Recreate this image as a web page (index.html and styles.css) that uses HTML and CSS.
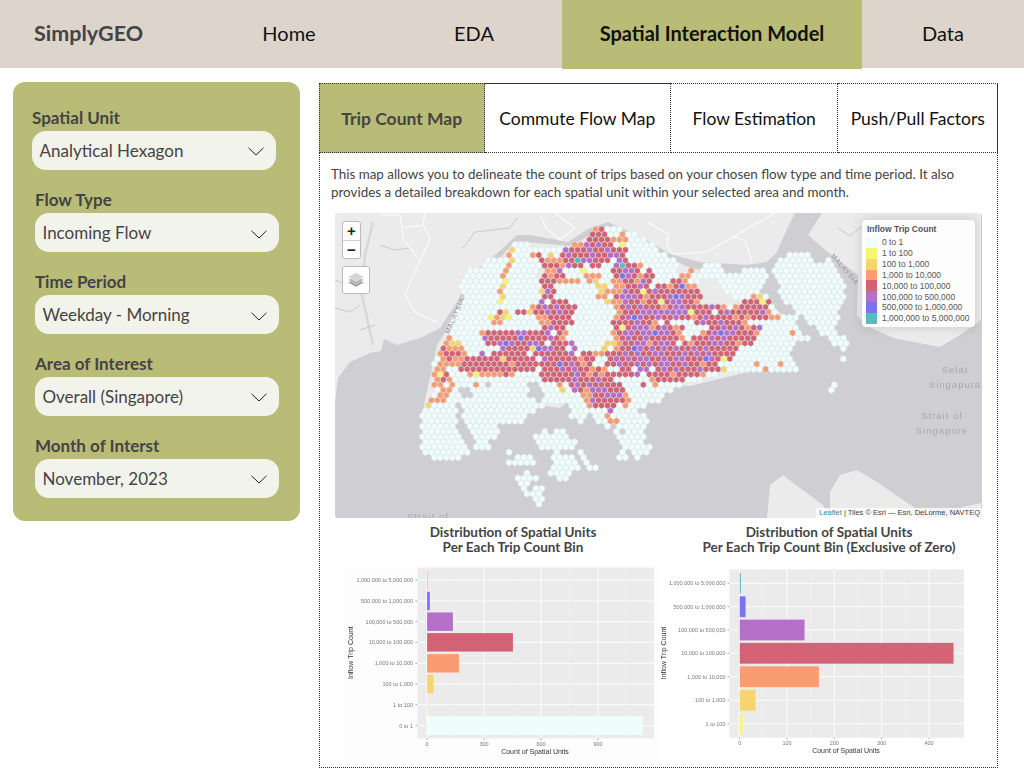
FILE: index.html
```html
<!DOCTYPE html>
<html lang="en">
<head>
  <meta charset="UTF-8">
  <meta name="viewport" content="width=device-width, initial-scale=1">
  <title>SimplyGEO</title>
  <link rel="stylesheet" href="styles.css">
</head>
<body>
  <header class="topbar">
    <div class="brand">SimplyGEO</div>
    <a class="nav-item nav-home">Home</a>
    <a class="nav-item nav-eda">EDA</a>
    <a class="nav-item nav-active">Spatial Interaction Model</a>
    <a class="nav-item nav-data">Data</a>
  </header>

  <div class="layout">
    <aside class="sidebar">
      <div class="field field-first">
        <div class="field-label">Spatial Unit</div>
        <div class="select"><span>Analytical Hexagon</span><svg class="chevron" viewBox="0 0 16 9"><path d="M.5.8 8 8l7.5-7.2"/></svg></div>
      </div>
      <div class="field">
        <div class="field-label">Flow Type</div>
        <div class="select"><span>Incoming Flow</span><svg class="chevron" viewBox="0 0 16 9"><path d="M.5.8 8 8l7.5-7.2"/></svg></div>
      </div>
      <div class="field">
        <div class="field-label">Time Period</div>
        <div class="select"><span>Weekday - Morning</span><svg class="chevron" viewBox="0 0 16 9"><path d="M.5.8 8 8l7.5-7.2"/></svg></div>
      </div>
      <div class="field">
        <div class="field-label">Area of Interest</div>
        <div class="select"><span>Overall (Singapore)</span><svg class="chevron" viewBox="0 0 16 9"><path d="M.5.8 8 8l7.5-7.2"/></svg></div>
      </div>
      <div class="field">
        <div class="field-label">Month of Interst</div>
        <div class="select"><span>November, 2023</span><svg class="chevron" viewBox="0 0 16 9"><path d="M.5.8 8 8l7.5-7.2"/></svg></div>
      </div>
    </aside>

    <main class="panel">
      <div class="tabs">
        <div class="tab tab-active">Trip Count Map</div>
        <div class="tab tab-commute">Commute Flow Map</div>
        <div class="tab tab-flow">Flow Estimation</div>
        <div class="tab tab-push">Push/Pull Factors</div>
      </div>

      <p class="intro">This map allows you to delineate the count of trips based on your chosen flow type and time period. It also provides a detailed breakdown for each spatial unit within your selected area and month.</p>

      <div class="map">
        <svg class="map-canvas" id="map-canvas" viewBox="335 213 647 305">
          <g class="land">
            <path d="M335 213V402L338 378 350 362 370 353 381 351 384 339 397 345 420 338 440 328 457 302 470 275 487 262 503 248 517 235 530 235 568 242 588 229 608 222 630 232 650 242 670 254 700 262 747 265 767 262 777 252 787 229 795 213Z"/>
            <path d="M808 235 830 254 858 275 857 315 865 325 893 338 940 347 960 335 981 320V213H822Z"/>
            <path d="M424 442V405L437 345 460 310 490 270 515 241 570 246 600 230 640 243 690 268 745 277 785 318 800 335 770 352 748 372 690 386 660 386 620 402 600 376 560 408 500 400 440 405Z"/>
            <path d="M830 518V492L840 475 857 470 877 482 900 498 915 508 917 518Z"/>
            <path d="M767 518 770 485 783 475 800 488 823 505 830 518Z"/>
            <path d="M950 518 962 507 981 503V518Z"/>
          </g>
          <path class="river" d="M373 222 365 255 362 295 373 345"/>
          <path class="creek" d="M335 308 350 312 360 305M335 280 345 284 361 270M380 245 395 250 410 248M463 248 475 232 510 228 517 218M360 330 375 325M838 228 850 236 860 228 875 222"/>
          <path class="road" d="M380 215H400L402 228 423 225 430 238 420 262 410 282 405 295 415 312 437 322M423 225 425 213M402 228 403 238 420 262M540 215 546 228 560 240 575 228 555 213M647 222 668 234 667 245 673 254 707 252 733 237 775 213M733 237 745 240 752 262"/>
          <g id="hexes"></g>
          <text class="place" x="955" y="373">Selat</text>
          <text class="place" x="955" y="388">Singapura</text>
          <text class="place" x="942" y="419">Strait of</text>
          <text class="place" x="942" y="434">Singapore</text>
          <text class="place" x="428" y="520">Strait of</text>
          <text class="border-label" transform="translate(449 334) rotate(-66)">MALAYSIA</text>
          <text class="border-label" transform="translate(831 256) rotate(50)">MALAYSIA</text>
        </svg>

        <div class="zoom-control">
          <div class="zoom-btn">+</div>
          <div class="zoom-btn">−</div>
        </div>
        <div class="layers-control">
          <svg viewBox="0 0 18 18" width="18" height="18">
            <path class="layer-low" d="M9 7 17 11.5 9 16 1 11.5Z"/>
            <path class="layer-mid" d="M9 4.5 17 9 9 13.5 1 9Z"/>
            <path class="layer-top" d="M9 1.5 17 6 9 10.5 1 6Z"/>
          </svg>
        </div>

        <div class="legend">
          <div class="legend-title">Inflow Trip Count</div>
          <div class="legend-row"><i class="swatch c0"></i>0 to 1</div>
          <div class="legend-row"><i class="swatch c1"></i>1 to 100</div>
          <div class="legend-row"><i class="swatch c2"></i>100 to 1,000</div>
          <div class="legend-row"><i class="swatch c3"></i>1,000 to 10,000</div>
          <div class="legend-row"><i class="swatch c4"></i>10,000 to 100,000</div>
          <div class="legend-row"><i class="swatch c5"></i>100,000 to 500,000</div>
          <div class="legend-row"><i class="swatch c6"></i>500,000 to 1,000,000</div>
          <div class="legend-row"><i class="swatch c7"></i>1,000,000 to 5,000,000</div>
        </div>
        <div class="attribution"><a>Leaflet</a> | Tiles © Esri — Esri, DeLorme, NAVTEQ</div>
      </div>

      <div class="charts">
        <section class="chart chart-left">
          <h3>Distribution of Spatial Units<br>Per Each Trip Count Bin</h3>
          <svg viewBox="343 565 317 195" width="317" height="195">
            <rect class="plot-bg" x="343" y="565" width="317" height="195"/>
            <rect class="plot" x="417.3" y="567.7" width="236.7" height="170.6"/>
            <path class="grid-minor" d="M455.7 567.7V738.3M512.7 567.7V738.3M569.3 567.7V738.3M626.3 567.7V738.3"/>
            <path class="grid-major" d="M427 567.7V738.3M484 567.7V738.3M541 567.7V738.3M598 567.7V738.3M417.3 580H654M417.3 601H654M417.3 621.7H654M417.3 642.3H654M417.3 663.3H654M417.3 684H654M417.3 704.7H654M417.3 725.7H654"/>
            <rect class="bar c7 faint" x="427" y="570.7" width="1" height="18.7"/>
            <rect class="bar c6" x="427" y="591.7" width="2.9" height="18.7"/>
            <rect class="bar c5" x="427" y="612.3" width="26" height="18.7"/>
            <rect class="bar c4" x="427" y="633" width="86" height="18.7"/>
            <rect class="bar c3" x="427" y="654" width="32" height="18.7"/>
            <rect class="bar c2" x="427" y="674.7" width="6.7" height="18.7"/>
            <rect class="bar c1 faint" x="427" y="695.3" width="1.5" height="18.7"/>
            <rect class="bar c0" x="427" y="716.3" width="216" height="18.7"/>
            <path class="tick" d="M415.5 580H417.3M415.5 601H417.3M415.5 621.7H417.3M415.5 642.3H417.3M415.5 663.3H417.3M415.5 684H417.3M415.5 704.7H417.3M415.5 725.7H417.3M427 738.3V740M484 738.3V740M541 738.3V740M598 738.3V740"/>
            <g class="tick-y">
              <text x="413" y="582">1,000,000 to 5,000,000</text>
              <text x="413" y="603">500,000 to 1,000,000</text>
              <text x="413" y="623.7">100,000 to 500,000</text>
              <text x="413" y="644.3">10,000 to 100,000</text>
              <text x="413" y="665.3">1,000 to 10,000</text>
              <text x="413" y="686">100 to 1,000</text>
              <text x="413" y="706.7">1 to 100</text>
              <text x="413" y="727.7">0 to 1</text>
            </g>
            <g class="tick-x">
              <text x="427" y="745.5">0</text>
              <text x="484" y="745.5">300</text>
              <text x="541" y="745.5">600</text>
              <text x="598" y="745.5">900</text>
            </g>
            <text class="axis-title" x="535" y="753.5">Count of Spatial Units</text>
            <text class="axis-title" transform="translate(352.5 652.7) rotate(-90)">Inflow Trip Count</text>
          </svg>
        </section>

        <section class="chart chart-right">
          <h3>Distribution of Spatial Units<br>Per Each Trip Count Bin (Exclusive of Zero)</h3>
          <svg viewBox="660 565 308 195" width="308" height="195">
            <rect class="plot" x="729.3" y="569.3" width="234.7" height="168.4"/>
            <path class="grid-minor" d="M763.3 569.3V737.7M810.7 569.3V737.7M858 569.3V737.7M905.3 569.3V737.7M952.7 569.3V737.7"/>
            <path class="grid-major" d="M739.7 569.3V737.7M787 569.3V737.7M834.3 569.3V737.7M881.7 569.3V737.7M929 569.3V737.7M729.3 583.3H964M729.3 606.7H964M729.3 630H964M729.3 653.3H964M729.3 676.7H964M729.3 700.3H964M729.3 723.7H964"/>
            <rect class="bar c7" x="739.7" y="572.8" width="1.3" height="21"/>
            <rect class="bar c6" x="739.7" y="596.2" width="6" height="21"/>
            <rect class="bar c5" x="739.7" y="619.5" width="65" height="21"/>
            <rect class="bar c4" x="739.7" y="642.8" width="214" height="21"/>
            <rect class="bar c3" x="739.7" y="666.2" width="79.3" height="21"/>
            <rect class="bar c2" x="739.7" y="689.8" width="16" height="21"/>
            <rect class="bar c1" x="739.7" y="713.2" width="3" height="21"/>
            <path class="tick" d="M727.5 583.3H729.3M727.5 606.7H729.3M727.5 630H729.3M727.5 653.3H729.3M727.5 676.7H729.3M727.5 700.3H729.3M727.5 723.7H729.3M739.7 737.7V739.4M787 737.7V739.4M834.3 737.7V739.4M881.7 737.7V739.4M929 737.7V739.4"/>
            <g class="tick-y">
              <text x="725.5" y="585.3">1,000,000 to 5,000,000</text>
              <text x="725.5" y="608.7">500,000 to 1,000,000</text>
              <text x="725.5" y="632">100,000 to 500,000</text>
              <text x="725.5" y="655.3">10,000 to 100,000</text>
              <text x="725.5" y="678.7">1,000 to 10,000</text>
              <text x="725.5" y="702.3">100 to 1,000</text>
              <text x="725.5" y="725.7">1 to 100</text>
            </g>
            <g class="tick-x">
              <text x="739.7" y="745">0</text>
              <text x="787" y="745">100</text>
              <text x="834.3" y="745">200</text>
              <text x="881.7" y="745">300</text>
              <text x="929" y="745">400</text>
            </g>
            <text class="axis-title" x="846" y="753.2">Count of Spatial Units</text>
            <text class="axis-title" transform="translate(665.5 653) rotate(-90)">Inflow Trip Count</text>
          </svg>
        </section>
      </div>
    </main>
  </div>

  <script src="script.js"></script>
</body>
</html>
```

FILE: styles.css
```css
* {
  box-sizing: border-box;
}

body {
  margin: 0;
  background: white;
  color: #444;
  font-family: Lato, "Open Sans", sans-serif;
}

.topbar {
  display: flex;
  height: 68px;
  background: #ddd5cc;
}

.brand {
  width: 196px;
  padding-left: 34px;
  font-size: 21.5px;
  font-weight: 700;
  line-height: 67px;
  color: #444;
}

.nav-item {
  font-size: 20px;
  line-height: 67px;
  text-align: center;
  color: #111;
}

.nav-home { width: 186px; }
.nav-eda { width: 180px; padding-left: 4px; }
.nav-data { width: 162px; }

.nav-active {
  width: 300px;
  height: 69px;
  background: #b9bc77;
  font-weight: 700;
}

.layout {
  display: flex;
  align-items: flex-start;
  padding: 14px 0 0 13px;
}

.sidebar {
  display: flex;
  flex-direction: column;
  gap: 18.8px;
  width: 287px;
  height: 439px;
  padding: 24.5px 21px 0 22px;
  background: #b9bc77;
  border-radius: 12px;
}

.field-first {
  margin-left: -3px;
  margin-bottom: 1px;
}

.field-label {
  height: 24px;
  font-size: 17px;
  font-weight: 700;
  line-height: 22px;
  color: #444;
}

.select {
  display: flex;
  align-items: center;
  justify-content: space-between;
  width: 244px;
  height: 39px;
  padding: 0 12px 0 7.5px;
  background: #f2f3ea;
  border-radius: 14px;
  font-size: 17px;
  color: #444;
}

.chevron {
  width: 16px;
  height: 9px;
  margin-top: 3px;
  fill: none;
  stroke: #222;
  stroke-width: 1;
}

.panel {
  width: 679px;
  height: 685px;
  margin: 1px 0 0 19px;
  border: 1px dotted #333;
}

.tabs {
  display: flex;
  height: 70px;
  margin: 0 -1px 0 -1px;
}

.tab {
  display: flex;
  align-items: center;
  justify-content: center;
  height: 70px;
  margin-top: -1px;
  border: 1px dotted #333;
  border-left: 0;
  font-size: 17.5px;
  color: #111;
}

.tab-active {
  width: 166px;
  border-left: 1px dotted #333;
  background: #b9bc77;
  font-weight: 700;
  color: #444;
}

.tab-commute { width: 187px; }
.tab-flow { width: 168px; }
.tab-push { width: 160px; }

.intro {
  margin: 11px 20px 0 11px;
  font-size: 13.4px;
  line-height: 18px;
  color: #444;
}

.map {
  position: relative;
  width: 647px;
  height: 305px;
  margin: 12px 0 0 15px;
  overflow: hidden;
  border-radius: 3px;
}

.map-canvas {
  display: block;
  width: 647px;
  height: 305px;
  background: #cfced2;
  filter: blur(.35px);
}

.land { fill: #ebebeb; }
.river { fill: none; stroke: #d8d8da; stroke-width: 2.5; }
.creek { fill: none; stroke: #c9c9cc; stroke-width: 1; }
.road { fill: none; stroke: #fbfbfb; stroke-width: 1.2; }

.hex { stroke: #dde3e3; stroke-width: .6; }
.hex-water { fill: #cfced2; stroke: none; }

.place {
  fill: #a9a9ad;
  font-family: "Liberation Sans", sans-serif;
  font-size: 9.5px;
  letter-spacing: 1px;
  text-anchor: middle;
}

.border-label {
  fill: #8e8e92;
  font-family: "Liberation Sans", sans-serif;
  font-size: 6.5px;
  letter-spacing: .8px;
}

.zoom-control {
  position: absolute;
  top: 8px;
  left: 7px;
  width: 19px;
  height: 38px;
  overflow: hidden;
  background: white;
  border: 1px solid #bbb;
  border-radius: 3px;
}

.zoom-btn {
  height: 18px;
  font-family: "Liberation Sans", sans-serif;
  font-size: 15px;
  font-weight: 700;
  line-height: 18px;
  text-align: center;
  color: #222;
}

.zoom-btn + .zoom-btn {
  height: 19px;
  border-top: 1px solid #ccc;
}

.layers-control {
  position: absolute;
  top: 53px;
  left: 7px;
  display: flex;
  align-items: center;
  justify-content: center;
  width: 28px;
  height: 28px;
  background: white;
  border: 1px solid #bbb;
  border-radius: 3px;
}

.layer-low { fill: #9b9b9b; stroke: #fff; stroke-width: .4; }
.layer-mid { fill: #b2b2b2; stroke: #fff; stroke-width: .4; }
.layer-top { fill: #d5d5d5; stroke: #fff; stroke-width: .4; }

.legend {
  position: absolute;
  top: 7px;
  right: 7px;
  width: 113px;
  height: 107px;
  padding: 4px 5px;
  background: rgba(255, 255, 255, .9);
  border-radius: 4px;
  box-shadow: 0 0 12px rgba(0, 0, 0, .15);
  font-family: "Liberation Sans", sans-serif;
  font-size: 8.5px;
  color: #555;
}

.legend-title {
  height: 13px;
  font-weight: 700;
  line-height: 11px;
}

.legend-row {
  display: flex;
  align-items: center;
  gap: 5px;
  height: 10.85px;
  white-space: nowrap;
}

.swatch {
  width: 11px;
  height: 10.85px;
  margin-left: -1px;
}

.c0 { fill: #f0fdfd; background: #f0fdfd; }
.c1 { fill: #f8f471; background: #f8f471; }
.c2 { fill: #f6d56f; background: #f6d56f; }
.c3 { fill: #f99b73; background: #f99b73; }
.c4 { fill: #d26274; background: #d26274; }
.c5 { fill: #b56fc9; background: #b56fc9; }
.c6 { fill: #7a72ef; background: #7a72ef; }
.c7 { fill: #54bdbd; background: #54bdbd; }

.attribution {
  position: absolute;
  right: 0;
  bottom: 0;
  height: 10px;
  padding: 0 2px 0 3px;
  background: rgba(255, 255, 255, .75);
  font-family: "Liberation Sans", sans-serif;
  font-size: 7.5px;
  line-height: 10px;
  color: #444;
}

.attribution a {
  color: #3a87b0;
}

.charts {
  display: flex;
  margin: 7px 0 0 23px;
}

.chart h3 {
  height: 40px;
  margin: 0;
  font-size: 13.5px;
  font-weight: 700;
  line-height: 15px;
  text-align: center;
  color: #444;
}

.chart svg {
  display: block;
  filter: blur(.3px);
}

.chart-left { width: 317px; }
.chart-left h3 { padding-left: 23px; }
.chart-right { width: 308px; }
.chart-right h3 { width: 338px; }

.plot-bg { fill: #fdfdfd; }
.plot { fill: #ebebeb; }
.grid-minor { fill: none; stroke: #f4f4f4; stroke-width: .5; }
.grid-major { fill: none; stroke: white; stroke-width: .9; }
.bar { stroke: rgba(255, 255, 255, .3); stroke-width: .6; }
.faint { opacity: .5; }
.tick { fill: none; stroke: #555; stroke-width: .5; }

.tick-y text,
.tick-x text {
  fill: #777;
  font-family: "Liberation Sans", sans-serif;
  font-size: 5.5px;
}

.tick-y text { text-anchor: end; }
.tick-x text { text-anchor: middle; }

.axis-title {
  fill: #333;
  font-family: "Liberation Sans", sans-serif;
  font-size: 7px;
  text-anchor: middle;
}
```

FILE: script.js
```js
// one string per grid row, "startColumn:values"
// 0 to 7 are the trip count bins, _ is a water gap
const rows = [
  "30:34000",
  "29:44400300",
  "29:4444333000",
  "16:000 26:33545440100000",
  "16:200000000 25:54445445444 36:00000",
  "15:30003402045444544554 35:0000000 62:0000",
  "12:000020000 21:4333447 28:55444 33:054 36:00000000 61:000000 69:0",
  "11:0000300000 21:4443544 28:04400 33:57443 38:000000 48:000 60:0000000000",
  "9:000000300000 22:335000 28:10000 33:44554 38:04 40:0000 46:3 48:0000 55:0000 60:00000000000",
  "8:000000300000 21:43440003330 32:0 33:46543 38:44 40:0000 44:3300 48:00000000000 60:00000000000",
  "8:00000001 16:00000 21:44433330 29:3200 33:33443 38:54 40:000 43:44300 51:00000000 61:00000000000",
  "7:00000002000000 21:440000000 30:220 33:3344 37:540 40:4434633 51:0000000 61:00000000000",
  "8:0000003000000 21:254 24:0000000 31:2333 35:544 38:14 40:54444444 52:000000 61:00000000000",
  "8:0000002000000 21:44 23:0000000 30:330 33:45554 38:3 39:444 42:5 43:65 45:444 53:000 56:320 61:00000000000",
  "8:000000 14:1000000 21:504 24:44 26:000000 32:233 35:544 38:344 41:14554 46:43 55:44414 62:0000000000",
  "7:000000000000 19:34545444 27:000000 33:345454443 42:455444 48:4543 52:03 54:44444 59:0 63:00000000",
  "7:0000000 14:42 16:0 17:44 19:2 20:4454544 27:0000000 34:3444 38:55555555 46:1 47:444 50:0 51:454 54:444 57:453 60:0 64:0000000",
  "6:000000 12:1321 16:0000 20:334444 26:0000000 33:345654 39:4 40:544 43:5443 47:45 49:4444 53:343 56:444 59:33 61:000 65:000000",
  "6:0000000 13:33 15:000000 21:33 23:4444 27:000000 33:4444 37:544 40:3040000 47:454454443 56:00000000 66:00000",
  "6:000000000000000 21:4544 25:00000000 33:414 36:555 39:34543 44:40000 49:445 52:4543 56:45 58:000000 67:000",
  "6:00000 11:3 12:44444 17:55 19:444 22:50 24:43 26:0000000 33:34554 38:556 41:554 44:3 45:000 48:3456 52:55 54:4443 58:00000 63:30 68:000",
  "5:300000 11:5 12:44444 17:6 18:4444 22:5 23:43 25:00000000 33:34 35:5445 39:44444 44:30 46:4445454444 56:4 57:00000000 65:0 69:000",
  "5:3220000 12:44 14:565 17:44 19:55 21:40 23:4445 27:00000 32:223 35:44553 40:4554 44:0 45:43 47:4445544 54:344 57:0000000 70:000",
  "4:4333 8:000000 14:5 15:4444 19:2 20:6 21:55 23:44 25:05 27:0000 31:20 33:344 36:6 37:54 39:545454 45:4545 49:44444 54:000000000 71:0",
  "4:3444 8:300 11:50 13:444444 19:0 20:4444445 27:04433 32:4 33:445454 39:45544 44:454545 50:4444 54:000000000",
  "3:0 4:3 5:433 8:444444 14:2 15:44444 20:0 21:54444 26:43 28:44 30:00 32:45 34:4545 38:5445 42:45544 47:4 48:6 49:54 51:14 53:0000000000 71:0",
  "3:0 4:3333 8:44444444 16:3 17:4444444 24:6 25:454 28:34 30:00 32:44544 37:54545 42:54454 47:4 48:3 49:44 51:00000 56:0 57:3 58:000 61:3 62:00",
  "3:33 5:00 7:4444444444444 20:0 21:444 24:5 25:45 27:44 29:343 32:00 34:440 37:550 40:45454 45:44544 50:4 51:2 52:000000 58:3 59:00000",
  "3:314 6:000 9:313333 15:43 17:0000 21:444444 27:54343 32:44444 37:50 39:4444 43:3 44:4444 48:300",
  "3:343 6:000000000000000 21:44444 26:5 27:444 30:5 31:44 33:00000 38:0 39:3 40:44444 45:000",
  "3:3303 7:000 10:30 12:_ 13:000000 19:__ 21:000 24:30 26:45 28:45 30:44444 35:000 38:403 41:0000 70:0",
  "3:033 6:0__ 9:0000000000 19:__ 21:000 24:20 26:5435554 33:44 35:00000000 69:0",
  "3:033 6:00 8:__ 10:000000000 19:___ 22:000000 28:33445553 36:000000",
  "2:333 5:000000000000000 20:_ 21:0000000 28:35 30:44444 35:3 36:00000",
  "2:20000 7:_ 8:00000000000000 26:000 29:34444 34:03 36:000",
  "1:000000 8:000000000000 26:000000 32:5 33:0000",
  "1:000000 8:00000000000 26:000 30:00 32:3 33:000000",
  "1:000000 8:0000000000 27:0 30:00 32:33 34:00000",
  "1:000000 9:00000 32:0 34:00000",
  "1:000000 9:00000 21:0 23:00 33:0 35:000",
  "1:0000000 10:0000 20:000000 34:00000",
  "1:0000000 10:00 20:0000000 34:0000",
  "1:00000000 10:000 21:000000 35:00000",
  "1:00000000 15:0 23:0 27:0 34:0 36:000",
  "3:00000 17:000 23:0000 28:0 34:00 37:0",
  "15:00000 23:0000 28:0",
  "23:00000 29:00",
  "18:0 22:0000",
  "17:0000 24:00",
  "17:00",
  "18:0 20:00",
  "18:000",
  "20:00",
  "20:0"
];

const SVG_NS = "http://www.w3.org/2000/svg";
const group = document.getElementById("hexes");
const dx = 5.97;
const dy = 5.185;
const radius = dx / Math.sqrt(3);

function hexPoints(cx, cy) {
  const pts = [];
  for (let i = 0; i < 6; i++) {
    const a = Math.PI / 3 * i + Math.PI / 6;
    pts.push((cx + radius * Math.cos(a)).toFixed(2) + "," + (cy + radius * Math.sin(a)).toFixed(2));
  }
  return pts.join(" ");
}

rows.forEach((row, r) => {
  row.split(" ").forEach((part) => {
    const [start, values] = part.split(":");
    [...values].forEach((v, i) => {
      const c = Number(start) + i;
      const hex = document.createElementNS(SVG_NS, "polygon");
      hex.setAttribute("points", hexPoints(416.5 + dx * c + (r % 2 ? dx / 2 : 0), 229.3 + dy * r));
      hex.setAttribute("class", v === "_" ? "hex-water" : "hex c" + v);
      group.appendChild(hex);
    });
  });
});
```
